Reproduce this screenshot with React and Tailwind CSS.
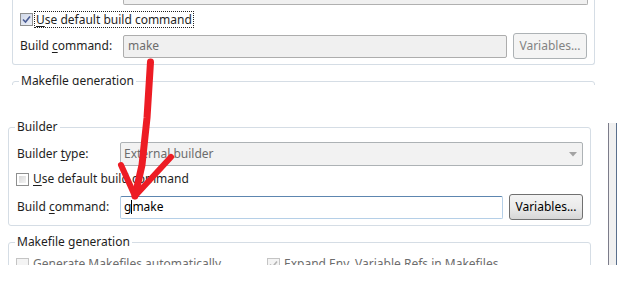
import React from 'react';

const Mn = ({ children }) => (
  <span className="underline decoration-1 underline-offset-[2px]">{children}</span>
);

const CheckMark = ({ color }) => (
  <svg width="9" height="9" viewBox="0 0 9 9" className="block">
    <path d="M1 4.5 L3.5 7 L8 1.5" fill="none" stroke={color} strokeWidth="1.6" />
  </svg>
);

const Checkbox = ({ checked, disabled, focused }) => {
  if (focused) {
    return (
      <div className="w-[13px] h-[13px] shrink-0 border border-[#8e8f8f] bg-gradient-to-br from-[#cfd7e8] to-[#eef1f8] flex items-center justify-center">
        {checked && <CheckMark color="#4a5c94" />}
      </div>
    );
  }
  if (disabled) {
    return (
      <div className="w-[13px] h-[13px] shrink-0 border border-[#c4c4c4] bg-[#f4f4f4] flex items-center justify-center">
        {checked && <CheckMark color="#b4b4b4" />}
      </div>
    );
  }
  return (
    <div className="w-[13px] h-[13px] shrink-0 border border-[#8e8f8f] bg-white p-[2px]">
      <div className="w-full h-full bg-gradient-to-br from-[#d8d8d8] to-[#f4f4f4]" />
    </div>
  );
};

const Group = ({ title, className = '', children }) => (
  <fieldset className={`border border-[#d5dde5] rounded-[3px] p-0 m-0 w-[583px] ${className}`}>
    <legend className="ml-[6px] px-[2px] leading-[16px]">{title}</legend>
    {children}
  </fieldset>
);

export default function App() {
  return (
    <div className="relative w-[625px] h-[282px] bg-white overflow-hidden font-['Noto_Sans',sans-serif] text-[12px] leading-[16px] text-[#1e1e1e]">
      {/* first shot: eclipse settings with the default command */}
      <div className="h-[85px] overflow-hidden">
        <div className="ml-[12px] w-[583px] h-[65px] border-x border-b border-[#d5dde5] rounded-b-[3px]">
          <div className="ml-[110px] w-[465px] h-[5px] border-x border-b border-[#b0b0b0] bg-[#f0f0f0] rounded-b-[2px]" />
          <div className="mt-[5px] pl-[7px] h-[18px] flex items-center">
            <Checkbox checked focused />
            <span className="ml-[1px] border border-dotted border-[#222] px-[1px] leading-[15px]">
              <Mn>U</Mn>se default build command
            </span>
          </div>
          <div className="mt-[5px] pl-[7px] h-[26px] flex items-center">
            <span className="w-[103px] shrink-0">
              Build <Mn>c</Mn>ommand:
            </span>
            <div className="w-[384px] h-[23px] border border-[#adadad] rounded-[2px] bg-[#f0f0f0] pl-[4px] flex items-center text-[#6d6d6d]">
              make
            </div>
            <div className="ml-[6px] w-[74px] h-[26px] border border-[#adb2b5] rounded-[3px] bg-[#f4f4f4] flex items-center justify-center text-[#838383]">
              Variables...
            </div>
          </div>
        </div>
        <Group title="Makefile generation" className="ml-[12px] mt-[8px] h-[40px]" />
      </div>

      {/* second shot: custom command typed in */}
      <div className="mt-[33px] h-[147px] overflow-hidden flex">
        <div className="w-[608px] shrink-0">
          <Group title="Builder" className="ml-[8px] mt-[1px] pb-[5px]">
            <div className="mt-[7px] pl-[8px] h-[24px] flex items-center">
              <span className="w-[103px] shrink-0">
                Builder <Mn>t</Mn>ype:
              </span>
              <div className="w-[463px] h-[24px] border border-[#adb2b5] rounded-[2px] bg-[#f2f2f2] pl-[3px] pr-[5px] flex items-center justify-between text-[#6d6d6d]">
                <span>External builder</span>
                <svg width="8" height="5" viewBox="0 0 8 5" className="block">
                  <path d="M0 0 H8 L4 4.5 Z" fill="#a3a3a3" />
                </svg>
              </div>
            </div>
            <div className="mt-[4px] pl-[7px] h-[18px] flex items-center">
              <Checkbox />
              <span className="ml-[4px]">
                <Mn>U</Mn>se default build command
              </span>
            </div>
            <div className="mt-[6px] pl-[8px] h-[26px] flex items-center">
              <span className="w-[103px] shrink-0">
                Build <Mn>c</Mn>ommand:
              </span>
              <div className="w-[383px] h-[23px] border border-[#b5cfe7] border-t-[#5d86b0] rounded-[2px] bg-white pl-[3px] flex items-center text-black">
                <span>g</span>
                <span className="w-[1px] h-[14px] bg-black" />
                <span>make</span>
              </div>
              <div className="ml-[6px] w-[74px] h-[26px] border border-[#707070] rounded-[3px] bg-gradient-to-b from-[#f3f3f3] via-[#ebebeb] to-[#d6d6d6] flex items-center justify-center text-black">
                Variables...
              </div>
            </div>
          </Group>
          <Group title="Makefile generation" className="ml-[8px] mt-[8px] h-[60px]">
            <div className="mt-[5px] pl-[7px] h-[18px] flex items-center text-[#6d6d6d]">
              <Checkbox disabled />
              <span className="ml-[4px] w-[234px]">Generate Makefiles automatically</span>
              <Checkbox disabled checked />
              <span className="ml-[4px]">Expand Env. Variable Refs in Makefiles</span>
            </div>
          </Group>
        </div>
        <div className="mt-[5px] flex">
          <div className="w-[1px] bg-[#7c7c8a]" />
          <div className="w-[7px] bg-[#f0f0f0]" />
          <div className="w-[1px] bg-[#5a6f8c]" />
        </div>
      </div>

      {/* red hand-drawn arrow */}
      <svg className="absolute inset-0 pointer-events-none" width="625" height="282" viewBox="0 0 625 282">
        <g fill="none" stroke="#ed1c24" strokeLinecap="round" strokeLinejoin="round">
          <path d="M150.5 62 L147 118 L142 165 L135 196" strokeWidth="7" />
          <path d="M121 165 L135 196" strokeWidth="6" />
          <path d="M171 157 L135 196" strokeWidth="6" />
        </g>
      </svg>
    </div>
  );
}
